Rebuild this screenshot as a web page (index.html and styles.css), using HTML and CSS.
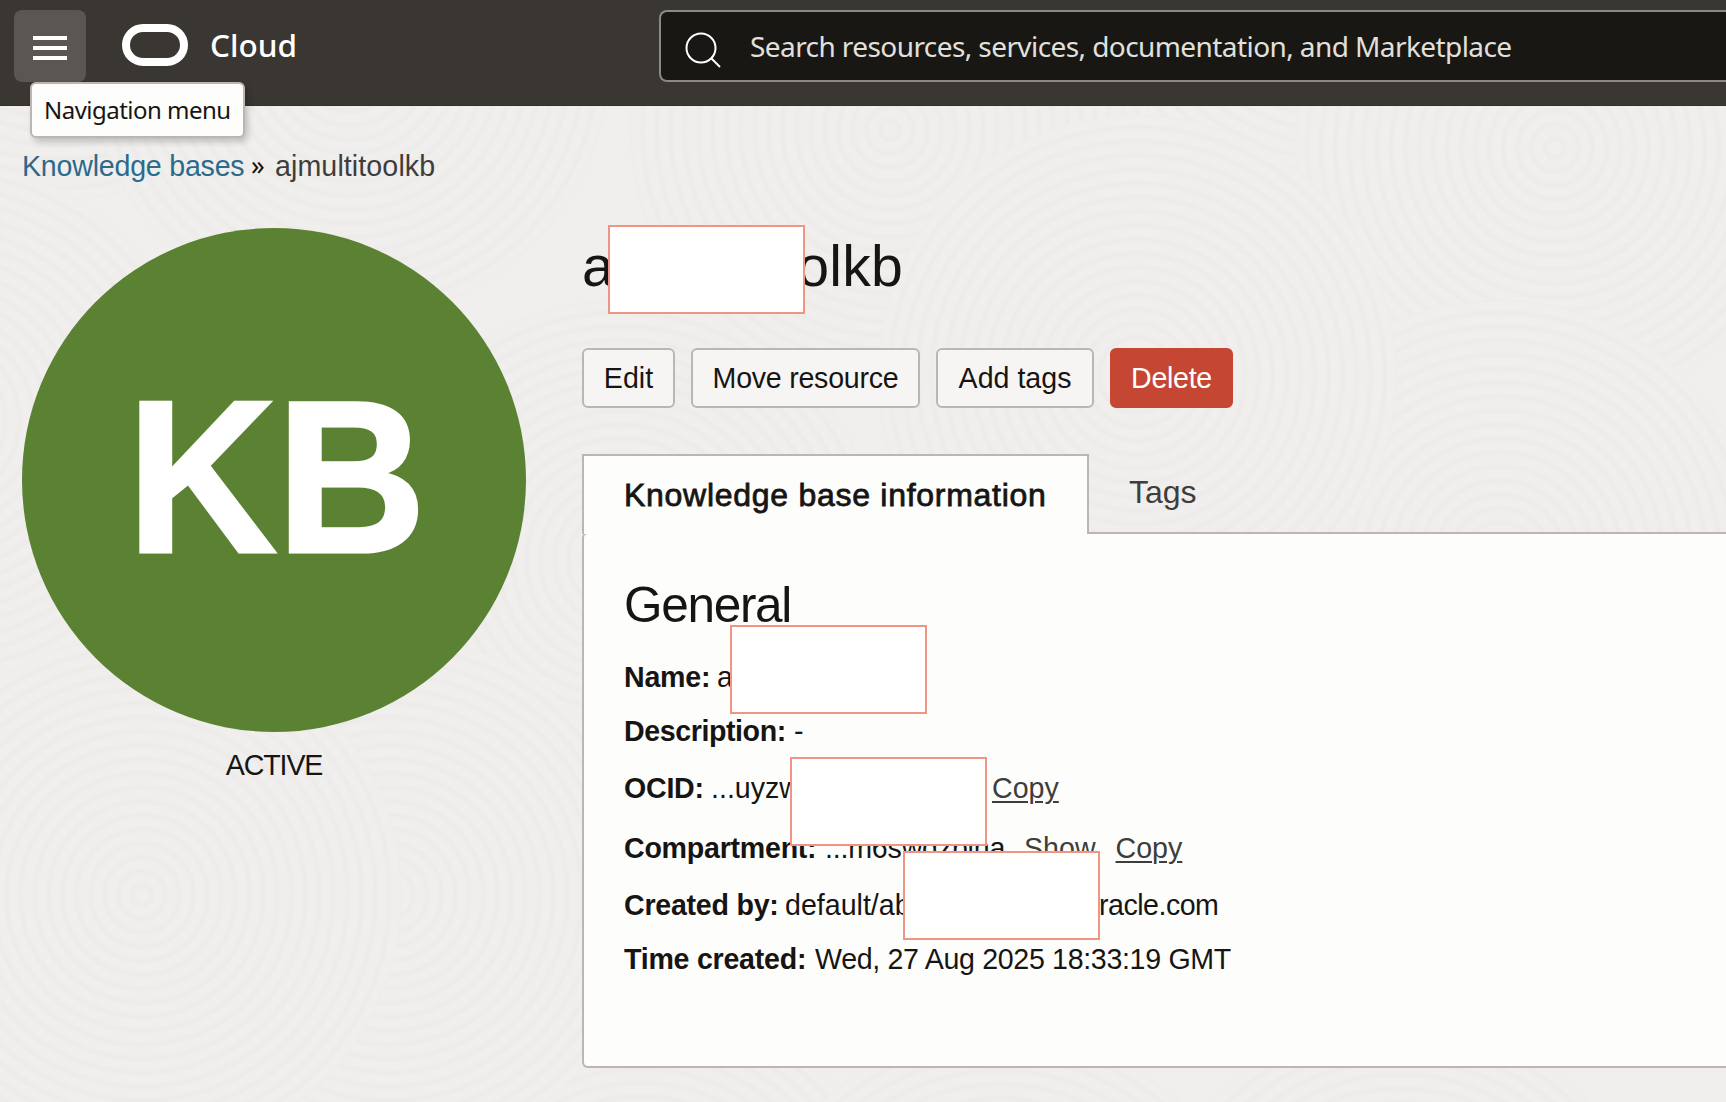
FILE: index.html
```html
<!DOCTYPE html>
<html lang="en">
<head>
<meta charset="utf-8">
<title>Knowledge base details</title>
<link rel="stylesheet" href="styles.css">
</head>
<body>
<svg class="texture" width="1726" height="1102" aria-hidden="true">
  <defs>
    <radialGradient id="rings" gradientUnits="userSpaceOnUse" cx="0" cy="0" r="14" spreadMethod="repeat">
      <stop offset="0" stop-color="#f0efee"/>
      <stop offset=".35" stop-color="#f0efed"/>
      <stop offset=".7" stop-color="#ecebea"/>
      <stop offset="1" stop-color="#f0efee"/>
    </radialGradient>
    <circle id="swirl" r="260" fill="url(#rings)"/>
  </defs>
  <use href="#swirl" x="60" y="-60"/>
  <use href="#swirl" x="860" y="-40"/>
  <use href="#swirl" x="350" y="60"/>
  <use href="#swirl" x="1340" y="-60"/>
  <use href="#swirl" x="1555" y="148"/>
  <use href="#swirl" x="620" y="560"/>
  <use href="#swirl" x="-60" y="420"/>
  <use href="#swirl" x="890" y="130"/>
  <use href="#swirl" x="1500" y="560"/>
  <use href="#swirl" x="1137" y="375"/>
  <use href="#swirl" x="640" y="1260"/>
  <use href="#swirl" x="1000" y="1290"/>
  <use href="#swirl" x="1400" y="1280"/>
  <use href="#swirl" x="390" y="895"/>
  <use href="#swirl" x="142" y="895"/>
</svg>

<header class="topbar">
  <button class="menu" aria-label="Navigation menu"><span></span><span></span><span></span></button>
  <div class="tooltip">Navigation menu</div>
  <div class="logo"></div>
  <div class="brand">Cloud</div>
  <div class="search">
    <svg width="40" height="40" viewBox="0 0 40 40" fill="none" stroke="#fff" stroke-width="2"><circle cx="17" cy="18" r="14.5"/><path d="M27 28L36 37"/></svg>
    <span>Search resources, services, documentation, and Marketplace</span>
  </div>
</header>

<nav class="crumbs"><a>Knowledge bases</a><i>»</i><span>ajmultitoolkb</span></nav>

<main class="page">
  <aside class="status">
    <div class="badge"><span>KB</span></div>
    <div class="state">ACTIVE</div>
  </aside>
  <section class="detail">
    <h1>ajmultitoolkb<b class="mask mask-title"></b></h1>
    <div class="actions">
      <button class="edit">Edit</button>
      <button class="move">Move resource</button>
      <button class="tag">Add tags</button>
      <button class="delete">Delete</button>
    </div>
    <div class="tabs">
      <div class="tab active"><span>Knowledge base information</span></div>
      <div class="tab"><span>Tags</span></div>
    </div>
    <div class="panel">
      <h2>General</h2>
      <div class="row name"><strong>Name:</strong><span>a</span><b class="mask"></b></div>
      <div class="row desc"><strong>Description:</strong><span>-</span></div>
      <div class="row ocid"><strong>OCID:</strong><span class="value">...uyzw</span><a>Copy</a><b class="mask"></b></div>
      <div class="row comp"><strong>Compartment:</strong><span class="value">...m6swqzpina</span><a class="show">Show</a><a>Copy</a></div>
      <div class="row owner"><strong>Created by:</strong><span class="value">default/ab</span><span class="domain">racle.com</span><b class="mask"></b></div>
      <div class="row time"><strong>Time created:</strong><span>Wed, 27 Aug 2025 18:33:19 GMT</span></div>
    </div>
  </section>
</main>
</body>
</html>
```
FILE: styles.css
```css
* { box-sizing: border-box; }
body {
  margin: 0;
  width: 1726px;
  height: 1102px;
  overflow: hidden;
  position: relative;
  background: #f0efee;
  color: #161513;
  font: 28.6px/40px "Liberation Sans", Arial, sans-serif;
}
.texture { position: absolute; top: 0; left: 0; z-index: -1; }

.topbar {
  position: relative;
  display: flex;
  height: 106px;
  padding: 10px 0 0 14px;
  background: #3a3631;
  border-bottom: 1px solid #352f2b;
  font-family: "Noto Sans", sans-serif;
}
.menu {
  display: flex;
  flex: none;
  flex-direction: column;
  gap: 6px;
  width: 72px;
  height: 72px;
  padding: 26px 19px 0;
  border: 0;
  border-radius: 8px;
  background: #5b5651;
}
.menu span { height: 4px; background: #fff; }
.tooltip {
  position: absolute;
  left: 30px;
  top: 82px;
  width: 215px;
  height: 56px;
  padding-left: 12px;
  border: 2px solid #bdb6b0;
  border-radius: 6px;
  background: #fdfdfb;
  box-shadow: 3px 4px 6px rgba(0, 0, 0, .2);
  font-size: 24px;
  line-height: 52px;
  letter-spacing: -.52px;
  white-space: nowrap;
}
.logo {
  flex: none;
  width: 66px;
  height: 42px;
  margin: 14px 0 0 36px;
  border: 8px solid #fff;
  border-radius: 21px;
}
.brand {
  flex: none;
  width: 471px;
  padding: 15px 0 0 22px;
  color: #fff;
  font-size: 31.5px;
  font-weight: 500;
}
.search {
  flex: 1;
  min-width: 0;
  display: flex;
  height: 72px;
  padding: 18px 0 0 23px;
  border: 2px solid #8b8987;
  border-right: 0;
  border-radius: 8px 0 0 8px;
  background: #181714;
  color: #e2e0dd;
  font-size: 28px;
  line-height: 33px;
  letter-spacing: -.58px;
  white-space: nowrap;
}
.search svg { flex: none; }
.search span { margin-left: 26px; }

.crumbs { display: flex; height: 122px; padding: 40px 0 0 22px; white-space: nowrap; }
.crumbs a { width: 228px; color: #2c6a8c; letter-spacing: -.22px; }
.crumbs i { width: 25px; padding-left: 1px; font: 27px/37px "Noto Sans", sans-serif; }
.crumbs span { color: #3f3d3b; letter-spacing: .1px; }

.page { display: flex; padding-left: 22px; }
.status { width: 504px; margin-right: 56px; text-align: center; }
.badge {
  display: flex;
  align-items: center;
  justify-content: center;
  height: 504px;
  padding: 0 0 7px 5px;
  border-radius: 50%;
  background: #5b8232;
  color: #fff;
  font-size: 207px;
  font-weight: 700;
}
.badge span { transform: scaleY(1.05); -webkit-text-stroke: 3px #fff; }
.state { padding-top: 13px; letter-spacing: -1.1px; }

.detail { flex: 1; }
h1 {
  position: relative;
  height: 86px;
  margin: 0;
  font-size: 57.2px;
  font-weight: 400;
  line-height: 76px;
  letter-spacing: .25px;
}
.mask {
  position: absolute;
  z-index: 1;
  width: 197px;
  height: 89px;
  border: 2px solid #f09583;
  background: #fff;
}
.mask-title { left: 26px; top: -3px; }

.actions { display: flex; gap: 16px; height: 60px; margin-top: 34px; }
.actions button {
  border: 2px solid #bdb6b0;
  border-radius: 6px;
  background: #f7f5f4;
  color: #161513;
  font: inherit;
  padding: 0;
  white-space: nowrap;
}
.actions .edit { width: 93px; }
.actions .move { width: 229px; letter-spacing: -.25px; }
.actions .tag { width: 158px; }
.actions .delete { width: 123px; border-color: #c54632; background: #c54632; color: #fff; letter-spacing: -.3px; }

.tabs { display: flex; height: 78px; margin-top: 46px; font-size: 32px; }
.tab { padding: 18px 0 0 40px; color: #3f3d3b; white-space: nowrap; }
.tab.active {
  position: relative;
  z-index: 1;
  width: 507px;
  height: 80px;
  padding: 19px 0 0 40px;
  border: 2px solid #bdb6b0;
  border-bottom: 0;
  background: #fdfdfb;
  color: #161513;
  letter-spacing: .72px;
  -webkit-text-stroke: .8px #161513;
}
.panel {
  height: 536px;
  padding: 41px 0 0 40px;
  border: 2px solid #bdb6b0;
  border-right: 0;
  border-radius: 6px 0 0 6px;
  background: #fdfdfb;
}
h2 { margin: 0 0 15px; font-size: 49.5px; font-weight: 400; line-height: 60px; letter-spacing: -1.3px; }
.row { position: relative; display: flex; height: 54px; line-height: 54px; white-space: nowrap; }
.row a { color: #3f3d3b; text-decoration: underline; text-decoration-thickness: 2px; text-underline-offset: 3px; }
.row strong { letter-spacing: -.25px; }
.name strong { width: 93px; }
.name .mask { left: 106px; top: -25px; }
.row.desc strong { width: 170px; letter-spacing: -.42px; }
.desc { margin-bottom: 3px; }
.ocid { margin-bottom: 6px; }
.ocid strong { width: 87px; }
.ocid .value { width: 281px; }
.ocid .mask { left: 166px; top: -4px; }
.comp { margin-bottom: 3px; }
.comp strong { width: 201px; }
.comp .value { width: 199px; letter-spacing: -.2px; }
.comp .show { margin-right: 20px; }
.owner strong { width: 161px; }
.owner .value { width: 314px; }
.owner .domain { letter-spacing: -.5px; }
.owner .mask { left: 279px; top: -27px; }
.time strong { width: 191px; }
.time span { letter-spacing: -.33px; }
```
